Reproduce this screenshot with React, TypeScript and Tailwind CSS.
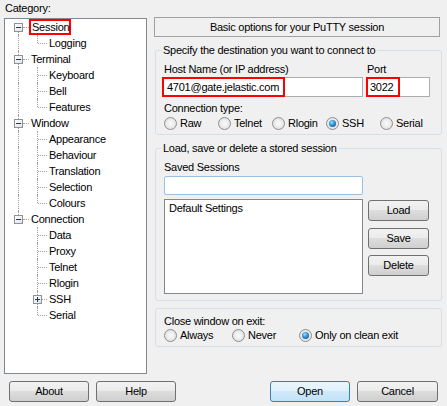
import { ReactNode } from "react";

type TreeItem = { label: string; level: 0 | 1; toggle?: "-" | "+"; selected?: boolean };

const tree: TreeItem[] = [
  { label: "Session", level: 0, toggle: "-", selected: true },
  { label: "Logging", level: 1 },
  { label: "Terminal", level: 0, toggle: "-" },
  { label: "Keyboard", level: 1 },
  { label: "Bell", level: 1 },
  { label: "Features", level: 1 },
  { label: "Window", level: 0, toggle: "-" },
  { label: "Appearance", level: 1 },
  { label: "Behaviour", level: 1 },
  { label: "Translation", level: 1 },
  { label: "Selection", level: 1 },
  { label: "Colours", level: 1 },
  { label: "Connection", level: 0, toggle: "-" },
  { label: "Data", level: 1 },
  { label: "Proxy", level: 1 },
  { label: "Telnet", level: 1 },
  { label: "Rlogin", level: 1 },
  { label: "SSH", level: 1, toggle: "+" },
  { label: "Serial", level: 1 },
];

const lastTop = tree.map((t) => t.level).lastIndexOf(0);

function ToggleBox({ sign }: { sign: "-" | "+" }) {
  return (
    <span className="absolute top-[4px] w-[9px] h-[9px] border border-[#919191] bg-[linear-gradient(135deg,#ffffff,#e2e2e2)] flex items-center justify-center">
      <span className="relative w-[5px] h-[1px] bg-[#1e3a6e]">
        {sign === "+" ? (
          <span className="absolute left-[2px] top-[-2px] w-[1px] h-[5px] bg-[#1e3a6e]" />
        ) : null}
      </span>
    </span>
  );
}

function TreeRow({ item, index }: { item: TreeItem; index: number }) {
  const dot = "absolute border-[#a0a0a0] border-dotted";
  if (item.level === 0) {
    return (
      <div className="relative h-4">
        {index > 0 ? <span className={`${dot} left-[13px] top-0 h-[8px] border-l`} /> : null}
        {index < lastTop ? <span className={`${dot} left-[13px] top-[8px] h-[8px] border-l`} /> : null}
        <span className={`${dot} left-[18px] top-[8px] w-[6px] border-t`} />
        <span className="absolute left-[9px] top-0 h-4">
          <ToggleBox sign={item.toggle ?? "-"} />
        </span>
        <span
          className={`absolute top-0 h-4 leading-4 whitespace-nowrap ${
            item.selected ? "left-[24px] w-[42px] border-2 border-[#ff0000] pl-[1px] leading-[12px]" : "left-[26px]"
          }`}
        >
          {item.label}
        </span>
      </div>
    );
  }
  const next = tree[index + 1];
  const lastChild = !next || next.level === 0;
  const underLast = index > lastTop;
  return (
    <div className="relative h-4">
      {!underLast ? <span className={`${dot} left-[13px] top-0 h-4 border-l`} /> : null}
      <span className={`${dot} left-[32px] top-0 border-l ${lastChild ? "h-[8px]" : "h-4"}`} />
      <span className={`${dot} left-[33px] top-[8px] w-[9px] border-t`} />
      {item.toggle ? (
        <span className="absolute left-[28px] top-0 h-4">
          <ToggleBox sign={item.toggle} />
        </span>
      ) : null}
      <span className="absolute left-[44px] top-0 h-4 leading-4 whitespace-nowrap">{item.label}</span>
    </div>
  );
}

function Radio({ label, checked, width }: { label: string; checked?: boolean; width: string }) {
  return (
    <div className={`flex items-center gap-[3px] h-[13px] ${width}`}>
      <span className="w-[13px] h-[13px] shrink-0 rounded-full border border-[#8e8f8f] bg-[radial-gradient(circle,#f6f6f6_20%,#d8d8d8)] flex items-center justify-center">
        {checked ? (
          <span className="w-[7px] h-[7px] rounded-full bg-[radial-gradient(circle_at_40%_35%,#9fe0ff,#2f8fd6_45%,#0c3f78)]" />
        ) : null}
      </span>
      <span className="leading-[13px] whitespace-nowrap">{label}</span>
    </div>
  );
}

function Button({ children, width, primary }: { children: ReactNode; width: string; primary?: boolean }) {
  return (
    <button
      className={`h-[21px] ${width} rounded-[3px] border leading-[19px] text-center ${
        primary
          ? "border-[#3c7fb1] bg-[linear-gradient(#eaf6fd,#e0f1fc_50%,#cfe9fa_50%,#c2e2f8)]"
          : "border-[#707070] bg-[linear-gradient(#f2f2f2,#ebebeb_50%,#dddddd_50%,#cfcfcf)]"
      }`}
    >
      {children}
    </button>
  );
}

function GroupBox({ legend, className, children }: { legend?: string; className?: string; children: ReactNode }) {
  return (
    <fieldset className={`ml-[1px] w-[287px] rounded-[3px] border border-[#d5dfe5] px-[7px] ${className ?? ""}`}>
      {legend ? <legend className="ml-[-2px] px-[2px] leading-[13px]">{legend}</legend> : null}
      {children}
    </fieldset>
  );
}

export default function App() {
  return (
    <div className="w-[447px] h-[406px] bg-[#f0f0f0] text-black text-[11px] tracking-[-0.25px] font-['Liberation_Sans',Arial,sans-serif] flex flex-col">
      <div className="flex h-[374px]">
        <div className="ml-[4px] w-[143px] flex flex-col">
          <div className="h-[18px] pt-[2px] pl-[1px] leading-[13px]">Category:</div>
          <div className="h-[356px] border border-[#828790] bg-white">
            {tree.map((item, i) => (
              <TreeRow key={item.label + i} item={item} index={i} />
            ))}
          </div>
        </div>

        <div className="ml-[7px] w-[288px] pt-[17px] flex flex-col">
          <div className="w-[286px] h-[20px] border border-[#a0a0a0] text-center leading-[18px]">
            Basic options for your PuTTY session
          </div>

          <GroupBox legend="Specify the destination you want to connect to" className="mt-[7px] pt-[6px] pb-[4px]">
            <div className="flex">
              <div className="w-[203px] pl-[1px] leading-[13px]">Host Name (or IP address)</div>
              <div className="pl-[1px] leading-[13px]">Port</div>
            </div>
            <div className="mt-[1px] flex gap-[3px]">
              <div className="relative w-[200px] h-[20px] border border-[#abadb3] bg-white pl-[3px] leading-[18px]">
                4701@gate.jelastic.com
                <span className="absolute left-[-2px] top-[-1px] w-[123px] h-[20px] border-2 border-[#ff0000]" />
              </div>
              <div className="relative w-[64px] h-[20px] border border-[#abadb3] bg-white pl-[3px] leading-[18px]">
                3022
                <span className="absolute left-[-1px] top-[-1px] w-[34px] h-[20px] border-2 border-[#ff0000]" />
              </div>
            </div>
            <div className="mt-[5px] pl-[1px] leading-[13px]">Connection type:</div>
            <div className="mt-[2px] ml-[1px] flex">
              <Radio label="Raw" width="w-[54px]" />
              <Radio label="Telnet" width="w-[54px]" />
              <Radio label="Rlogin" width="w-[54px]" />
              <Radio label="SSH" width="w-[54px]" checked />
              <Radio label="Serial" width="w-[54px]" />
            </div>
          </GroupBox>

          <GroupBox legend="Load, save or delete a stored session" className="mt-[7px] pt-[6px] pb-[6px]">
            <div className="pl-[1px] leading-[13px]">Saved Sessions</div>
            <div className="mt-[2px] ml-[1px] w-[199px] h-[19px] rounded-[2px] border border-[#98c1e4] bg-white" />
            <div className="mt-[4px] ml-[1px] flex gap-[5px]">
              <div className="w-[199px] h-[95px] border border-[#828790] bg-white pl-[4px] pt-[2px] leading-[13px]">
                Default Settings
              </div>
              <div className="flex flex-col pt-[1px]">
                <Button width="w-[61px]">Load</Button>
                <div className="mt-[7px]">
                  <Button width="w-[61px]">Save</Button>
                </div>
                <div className="mt-[6px]">
                  <Button width="w-[61px]">Delete</Button>
                </div>
              </div>
            </div>
          </GroupBox>

          <GroupBox className="mt-[7px] pt-[6px] pb-[4px]">
            <div className="pl-[1px] leading-[13px]">Close window on exit:</div>
            <div className="mt-[1px] ml-[1px] flex">
              <Radio label="Always" width="w-[68px]" />
              <Radio label="Never" width="w-[67px]" />
              <Radio label="Only on clean exit" width="w-[120px]" checked />
            </div>
          </GroupBox>
        </div>
      </div>

      <div className="flex pt-[7px]">
        <div className="ml-[9px]">
          <Button width="w-[80px]">About</Button>
        </div>
        <div className="ml-[7px]">
          <Button width="w-[80px]">Help</Button>
        </div>
        <div className="ml-[94px]">
          <Button width="w-[80px]" primary>
            Open
          </Button>
        </div>
        <div className="ml-[7px]">
          <Button width="w-[81px]">Cancel</Button>
        </div>
      </div>
    </div>
  );
}
